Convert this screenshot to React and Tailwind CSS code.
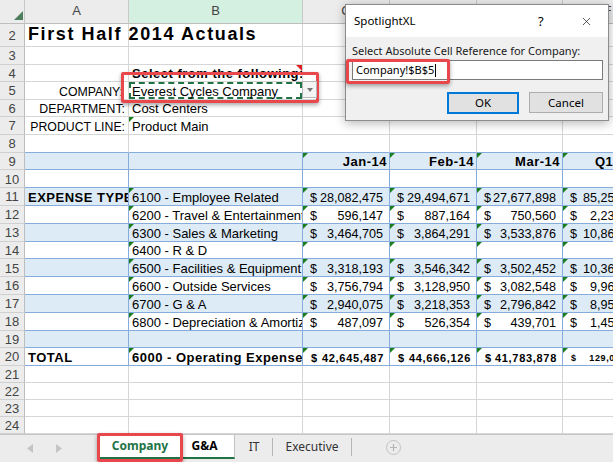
import React from 'react';
import { X } from 'lucide-react';

const GRID = 'border-r-[#d6d6d6]';
const GRIDB = 'border-b-[#d6d6d6]';
const BLUE_R = 'border-r-[#86acdb]';
const BLUE_B = 'border-b-[#86acdb]';
const COLS = ['w-[104px]', 'w-[174px]', 'w-[87px]', 'w-[87px]', 'w-[86px]', 'w-[90px]'];

const expenses = {
  11: ['6100 - Employee Related', ['28,082,475', '29,494,671', '27,677,898', '85,255,044']],
  12: ['6200 - Travel & Entertainment', ['596,147', '887,164', '750,560', '2,233,871']],
  13: ['6300 - Sales & Marketing', ['3,464,705', '3,864,291', '3,533,876', '10,862,872']],
  14: ['6400 - R & D', null],
  15: ['6500 - Facilities & Equipment', ['3,318,193', '3,546,342', '3,502,452', '10,366,987']],
  16: ['6600 - Outside Services', ['3,756,794', '3,128,950', '3,082,548', '9,968,292']],
  17: ['6700 - G & A', ['2,940,075', '3,218,353', '2,796,842', '8,955,270']],
  18: ['6800 - Depreciation & Amortization', ['487,097', '526,354', '439,701', '1,453,152']],
};
const months = ['Jan-14', 'Feb-14', 'Mar-14', 'Q1 Total'];
const totals = ['42,645,487', '44,666,126', '41,783,878', '129,095,491'];

const Tri = () => (
  <span className="absolute left-0 top-0 border-t-[5px] border-r-[5px] border-t-[#1b7d1b] border-r-transparent" />
);

function Cell({ w, bR = GRID, bB = GRIDB, bg = '', tri, pad = 'pl-[3px]', clip = true, className = '', children }) {
  return (
    <div
      className={`relative shrink-0 h-full border-r border-b ${bR} ${bB} ${bg} ${w} ${pad} flex items-end leading-[14px] text-[13px] whitespace-nowrap ${clip ? 'overflow-hidden' : ''} ${className}`}
    >
      {tri && <Tri />}
      {children}
    </div>
  );
}

function RowHead({ n }) {
  return (
    <div className="w-[25px] shrink-0 h-full bg-[#ececec] border-r border-b border-r-[#bdbdbd] border-b-[#d0d0d0] flex items-center justify-center text-[13px] text-[#444] pt-[1px]">
      {n}
    </div>
  );
}

function Acct({ v, total, small }) {
  const cls = total
    ? small
      ? 'text-[9px] font-bold tracking-[0.6px]'
      : 'text-[11px] font-bold tracking-[0.7px]'
    : 'text-[12.6px]';
  return (
    <div className={`flex w-full justify-between ${cls}`}>
      <span>$</span>
      <span>{v}</span>
    </div>
  );
}

function SheetRow({ r }) {
  const inTable = r >= 9 && r <= 20;
  const shade = inTable && r % 2 === 1 ? 'bg-[#ddebf7]' : '';
  const bB = r >= 8 && r <= 20 ? BLUE_B : GRIDB;
  const bR = inTable ? BLUE_R : GRID;
  const exp = expenses[r];
  const h = r <= 8 ? 'h-[17.6px]' : r <= 20 ? 'h-[17.8px]' : 'h-[17px]';

  let a = null;
  let aCls = 'pl-[3px]';
  if (r === 5) { a = <span className="text-[12.3px]">COMPANY:</span>; aCls = 'justify-end pr-[5px]'; }
  if (r === 6) { a = <span className="text-[12.3px]">DEPARTMENT:</span>; aCls = 'justify-end pr-[3px]'; }
  if (r === 7) { a = <span className="text-[12.3px]">PRODUCT LINE:</span>; aCls = 'justify-end pr-[3px]'; }
  if (r === 11) { a = 'EXPENSE TYPE'; aCls = 'pl-[3px] font-bold tracking-[0.5px]'; }
  if (r === 20) { a = 'TOTAL'; aCls = 'pl-[3px] font-bold tracking-[0.5px]'; }

  let b = null;
  let bCls = 'pl-[3px]';
  let bTri = false;
  if (r === 4) { b = 'Select from the following:'; bCls = 'pl-[3px] font-bold tracking-[0.5px]'; }
  if (r === 6) b = 'Cost Centers';
  if (r === 7) { b = 'Product Main'; bTri = true; }
  if (exp) { b = exp[0]; bTri = true; }
  if (r === 20) { b = '6000 - Operating Expenses'; bCls = 'pl-[3px] font-bold tracking-[0.5px]'; bTri = true; }

  return (
    <div className={`flex ${h} shrink-0`}>
      <RowHead n={r} />
      <Cell w={COLS[0]} bR={bR} bB={bB} bg={shade} pad={aCls}>{a}</Cell>
      {r === 5 ? (
        <Cell w={COLS[1]} clip={false} className="z-10">
          <span className="absolute inset-0 border-2 border-dashed border-[#217346]" />
          <span className="relative">Everest Cycles Company</span>
          <span className="absolute left-full top-[-1px] w-[15px] h-[17px] bg-[#f4f4f4] border border-[#b9b9b9] flex items-center justify-center">
            <span className="border-t-[4px] border-x-[3px] border-t-[#777] border-x-transparent" />
          </span>
        </Cell>
      ) : (
        <Cell w={COLS[1]} bR={bR} bB={bB} bg={shade} pad={bCls} tri={bTri}>
          {r === 4 && (
            <span className="absolute right-0 top-0 border-t-[6px] border-l-[6px] border-t-[#e02020] border-l-transparent" />
          )}
          {b}
        </Cell>
      )}
      {[0, 1, 2, 3].map((i) => {
        let content = null;
        let pad = 'pl-[7px] pr-[6px]';
        let tri = false;
        if (r === 9) {
          content = <div className="w-full text-right font-bold tracking-[0.5px]">{months[i]}</div>;
          pad = 'pr-[2px]';
          tri = true;
        }
        if (exp) {
          tri = true;
          if (exp[1]) content = <Acct v={exp[1][i]} />;
        }
        if (r === 20) {
          tri = true;
          content = <Acct v={totals[i]} total small={i === 3} />;
          pad = i === 3 ? 'pl-[8px] pr-[6px]' : 'pl-[8px] pr-[5px]';
        }
        return (
          <Cell key={i} w={COLS[i + 2]} bR={bR} bB={bB} bg={shade} pad={pad} tri={tri}>
            {content}
          </Cell>
        );
      })}
    </div>
  );
}

export default function App() {
  const rows = [];
  for (let r = 3; r <= 24; r++) rows.push(<SheetRow key={r} r={r} />);

  return (
    <div className="relative w-[613px] h-[462px] overflow-hidden bg-white text-black [font-family:'Liberation_Sans',Arial,sans-serif]">
      <div className="h-[434px] overflow-hidden flex flex-col">
        {/* column headers */}
        <div className="flex h-[24px] shrink-0 text-[13px] text-[#444]">
          <div className="relative w-[25px] shrink-0 bg-[#ececec] border-r border-b border-r-[#c8c8c8] border-b-[#bdbdbd]">
            <svg className="absolute left-[14px] top-[11px]" width="9" height="9" viewBox="0 0 9 9">
              <polygon points="9,0 9,9 0,9" fill="#4d7f5c" />
            </svg>
          </div>
          {['A', 'B', 'C', 'D', 'E', 'F'].map((l, i) => (
            <div
              key={l}
              className={`${COLS[i]} shrink-0 border-r border-b border-r-[#c8c8c8] border-b-[#bdbdbd] flex items-end justify-center pb-[3px] ${i === 1 ? 'bg-[#d3f0e0]' : 'bg-[#ececec]'}`}
            >
              {l}
            </div>
          ))}
        </div>

        {/* row 2 */}
        <div className="flex h-[23px] shrink-0">
          <RowHead n={2} />
          <Cell w={COLS[0]} clip={false} pad="pl-[3px] pb-[2px]" className="z-10">
            <span className="text-[18px] leading-[20px] font-bold tracking-[1.6px]">First Half 2014 Actuals</span>
          </Cell>
          {[1, 2, 3, 4, 5].map((i) => (
            <Cell key={i} w={COLS[i]} />
          ))}
        </div>

        {rows}
      </div>

      {/* sheet tabs */}
      <div className="relative h-[28px] bg-[#ececec] border-t border-[#c6c6c6] flex [font-family:'Noto_Sans',sans-serif] text-[12px]">
        <div className="w-[100px] shrink-0 relative">
          <svg className="absolute left-[27px] top-[9px]" width="6" height="9" viewBox="0 0 6 9">
            <polygon points="6,0 6,9 0,4.5" fill="#c4c4c4" />
          </svg>
          <svg className="absolute left-[56px] top-[9px]" width="6" height="9" viewBox="0 0 6 9">
            <polygon points="0,0 0,9 6,4.5" fill="#c4c4c4" />
          </svg>
        </div>
        <div className="w-[80px] h-[24px] shrink-0 bg-white border-b-2 border-[#217346] flex items-center justify-center font-bold text-[#217346]">
          Company
        </div>
        <div className="w-[55px] h-[24px] shrink-0 bg-white border-b-2 border-[#217346] border-r border-r-[#c0c0c0] flex items-center justify-center pr-[5px] font-bold text-black">
          G&amp;A
        </div>
        <div className="w-[37px] h-[24px] shrink-0 flex items-center justify-center text-[#333]">
          <span className="pl-[1px]">IT</span>
        </div>
        <div className="w-[80px] h-[18px] mt-[3px] shrink-0 border-x border-[#b5b5b5] flex items-center justify-center text-[#333]">
          Executive
        </div>
        <div className="ml-[34px] mt-[5px] w-[15px] h-[15px] rounded-full border border-[#c2c2c2] flex items-center justify-center">
          <svg width="9" height="9" viewBox="0 0 9 9">
            <path d="M4.5 1v7M1 4.5h7" stroke="#b5b5b5" strokeWidth="1.2" />
          </svg>
        </div>
      </div>

      {/* dialog */}
      <div className="absolute left-[345px] top-[4px] w-[264px] h-[117px] bg-[#f0f0f0] border border-[#8c8c8c] shadow-[0_2px_10px_rgba(0,0,0,0.3)] flex flex-col [font-family:'Noto_Sans',sans-serif] text-black">
        <div className="relative h-[32px] shrink-0 bg-white flex items-center pl-[8px] text-[11.5px]">
          SpotlightXL
          <span className="absolute left-[192px] top-[8px] text-[13px] leading-[16px]">?</span>
          <X className="absolute left-[234px] top-[10px]" size={13} strokeWidth={1.2} />
        </div>
        <div className="pl-[6px] pt-[7px] text-[11px] leading-[14px] text-[#1a1a1a] whitespace-nowrap">
          Select Absolute Cell Reference for Company:
        </div>
        <div className="ml-[6px] mt-[2px] w-[251px] h-[20px] bg-white border border-[#7a7a7a] flex items-center pl-[3px] text-[11px]">
          Company!$B$5
          <span className="w-px h-[13px] bg-black ml-[1px]" />
        </div>
        <div className="flex mt-[12px]">
          <div className="ml-[101px] w-[72px] h-[22px] bg-[#e1e1e1] border-2 border-[#0078d7] flex items-center justify-center text-[11.5px]">
            OK
          </div>
          <div className="ml-[10px] w-[74px] h-[21px] bg-[#e1e1e1] border border-[#adadad] flex items-center justify-center text-[11.5px]">
            Cancel
          </div>
        </div>
      </div>

      {/* red highlight boxes */}
      <div className="absolute left-[121px] top-[72px] w-[198px] h-[31px] border-[3px] border-[#e8474c] rounded-[2px] shadow-[0_2px_4px_rgba(0,0,0,0.35)]" />
      <div className="absolute left-[346px] top-[59px] w-[104px] h-[25px] border-[3px] border-[#e8474c] rounded-[2px] shadow-[0_2px_4px_rgba(0,0,0,0.35)]" />
      <div className="absolute left-[97px] top-[433px] w-[86px] h-[29px] border-[3px] border-[#e8474c] rounded-[2px] shadow-[0_2px_4px_rgba(0,0,0,0.35)]" />
    </div>
  );
}
